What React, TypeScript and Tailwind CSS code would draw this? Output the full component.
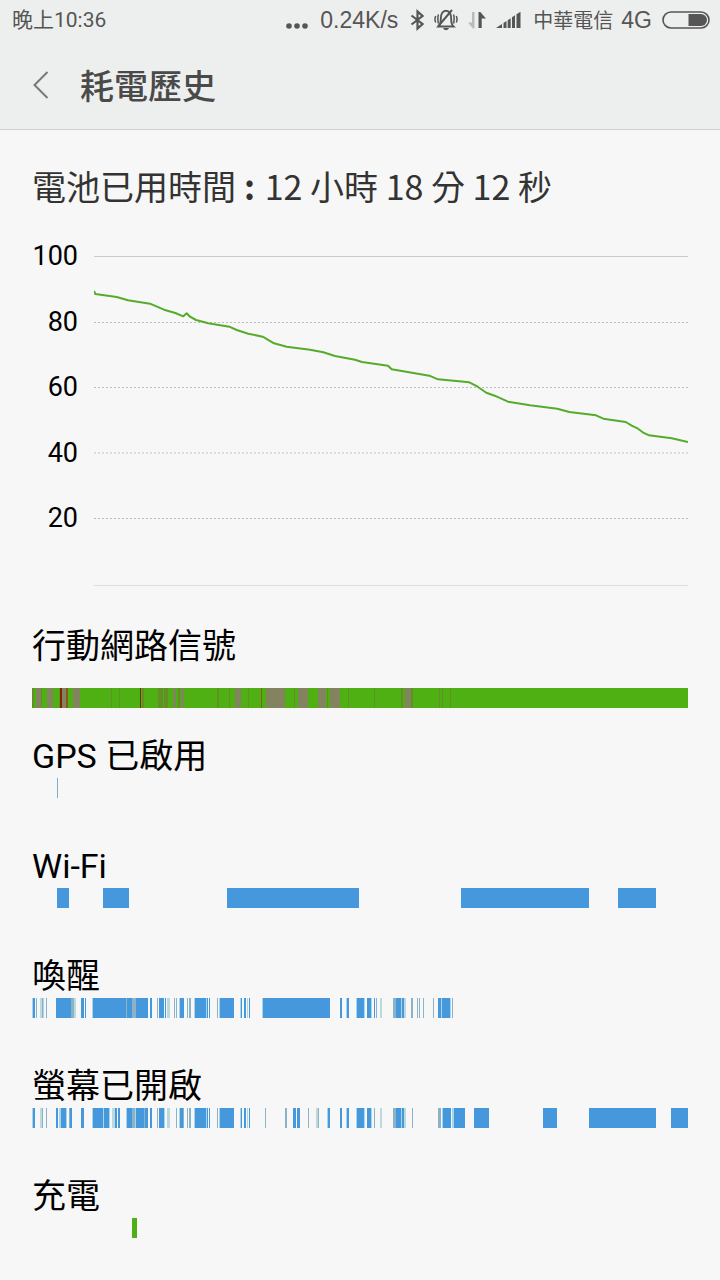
import type { ReactNode } from 'react'

// [start, end, shade]
type Segment = [number, number, string]

interface HistoryRow {
  label: string
  segments: Segment[]
  roomy?: boolean
}

const B = '#4598dc'
const G = '#8ab4c6'
const L = '#a9d5ea'
const P = '#bcd9de'
const GREEN = '#4fb013'
const OLIVE = '#638f27'
const TAUPE = '#84835f'
const BROWN = '#8a5a1c'
const RED = '#852208'

const signal: Segment[] = [
  [0, 656, GREEN], [0, 2, OLIVE], [4, 9, TAUPE], [9, 10, OLIVE], [15, 21, TAUPE],
  [27, 28, OLIVE], [28, 30, RED], [30, 34, TAUPE], [34, 36, BROWN], [41, 48, TAUPE],
  [79, 80, OLIVE], [87, 88, OLIVE], [108, 109, RED], [110, 112, OLIVE], [126, 131, OLIVE],
  [132, 136, OLIVE], [141, 144, TAUPE], [146, 148, OLIVE], [149, 152, TAUPE], [185, 187, OLIVE],
  [197, 198, OLIVE], [203, 209, TAUPE], [216, 217, OLIVE], [229, 230, BROWN], [234, 253, TAUPE],
  [262, 263, OLIVE], [266, 276, TAUPE], [286, 294, TAUPE], [295, 296, OLIVE], [298, 308, TAUPE],
  [316, 317, OLIVE], [342, 343, OLIVE], [369, 371, OLIVE], [373, 379, TAUPE], [379, 381, OLIVE],
  [407, 408, OLIVE], [410, 411, OLIVE], [418, 419, OLIVE],
]

const wifi: Segment[] = [
  [25, 37, B], [71, 97, B], [195, 327, B], [429, 557, B], [586, 624, B],
]

const wake: Segment[] = [
  [0, 1, L], [1, 3, B], [4, 5, G], [8, 10, P], [10, 11, G], [11, 12, L], [14, 15, G],
  [24, 39, B], [39, 42, G], [42, 44, P], [49, 52, B], [53, 54, B], [60, 61, L], [61, 94, B],
  [94, 95, G], [95, 100, B], [100, 104, G], [104, 116, B], [118, 120, B], [125, 126, G],
  [127, 132, B], [133, 134, B], [135, 138, P], [142, 143, G], [144, 145, G], [147, 148, L],
  [148, 152, B], [155, 156, G], [157, 159, G], [162, 163, L], [163, 174, B], [174, 175, L],
  [175, 176, B], [177, 178, B], [185, 186, G], [187, 188, L], [188, 202, B], [208, 209, L],
  [209, 210, B], [212, 214, B], [215, 216, L], [217, 218, B], [230, 231, L], [231, 298, B],
  [308, 310, B], [314, 315, L], [315, 317, B], [324, 325, L], [325, 332, B], [332, 333, L],
  [335, 339, B], [339, 340, L], [342, 343, B], [344, 345, G], [348, 350, P], [361, 364, G],
  [364, 369, B], [369, 370, L], [370, 372, B], [372, 374, P], [379, 381, G], [385, 386, G],
  [387, 388, G], [391, 392, G], [401, 402, G], [406, 409, B], [409, 410, L], [410, 418, B],
  [418, 419, L], [420, 421, G],
]

const screenOn: Segment[] = [
  [0, 1, L], [1, 3, B], [8, 10, P], [10, 11, G], [14, 15, G], [24, 26, B], [27, 29, L],
  [29, 34, B], [34, 35, L], [37, 38, G], [38, 40, B], [49, 52, B], [60, 61, L], [61, 71, B],
  [71, 72, L], [72, 77, B], [77, 78, L], [80, 83, P], [83, 85, B], [86, 88, B], [94, 95, L],
  [95, 100, B], [100, 103, G], [103, 104, L], [104, 112, B], [112, 113, G], [113, 116, B],
  [118, 120, B], [125, 126, G], [127, 132, B], [132, 133, L], [135, 138, P], [144, 145, G],
  [147, 148, L], [148, 151, B], [151, 152, G], [155, 156, G], [157, 159, G], [162, 163, L],
  [163, 174, B], [174, 175, L], [175, 176, B], [177, 178, B], [185, 186, G], [187, 188, L],
  [188, 202, B], [208, 209, L], [209, 210, B], [212, 214, B], [215, 216, L], [217, 218, B],
  [233, 234, G], [253, 255, G], [261, 264, B], [265, 268, B], [276, 277, G], [284, 286, P],
  [286, 287, G], [295, 296, L], [296, 298, B], [308, 310, B], [314, 315, L], [315, 317, B],
  [324, 325, L], [325, 332, B], [332, 333, L], [335, 339, B], [339, 340, L], [342, 343, G],
  [348, 350, P], [361, 364, G], [364, 369, B], [369, 370, L], [370, 372, B], [372, 374, P],
  [380, 381, G], [406, 409, G], [410, 411, L], [411, 419, B], [420, 422, L], [422, 433, B],
  [442, 457, B], [511, 525, B], [557, 624, B], [639, 656, B],
]

const rows: HistoryRow[] = [
  { label: '行動網路信號', segments: signal, roomy: true },
  { label: 'GPS 已啟用', segments: [[25, 26, '#7cafd3']] },
  { label: 'Wi-Fi', segments: wifi },
  { label: '喚醒', segments: wake },
  { label: '螢幕已開啟', segments: screenOn },
  { label: '充電', segments: [[100, 105, GREEN]] },
]

const levelPoints =
  '0,35 1.3,38 22.7,41 34,44.3 56,47.7 70,53.7 81.3,57 89.3,60.3 92.7,57.3 96,60.7 102,64 ' +
  '114.3,67.3 135.3,70.7 142.7,74 154.3,77.7 168.7,80.7 180,87.3 192.7,90.7 216,93.7 ' +
  '229.3,96.3 241,100 261,103.7 268,106 294,109.7 297.7,113.3 335.3,119.7 344,123.3 ' +
  '375.3,126.3 383.7,130.7 392.3,136.7 400.7,139.7 414,145.7 436,149.3 463.3,152.7 ' +
  '475.3,156 502,159.3 509.3,162.7 531.7,166 537.7,169.7 544,172.7 548.7,176.3 555,179.3 ' +
  '577.7,182.3 594,186'

function Icon({ className, viewBox, children }: { className: string; viewBox: string; children: ReactNode }) {
  return (
    <svg className={className} viewBox={viewBox} fill="none" stroke="currentColor" aria-hidden="true">
      {children}
    </svg>
  )
}

function StatusBar() {
  return (
    <div className="flex h-10 items-center justify-between pl-3 pr-[10px] text-[23px] leading-10 text-[#555]">
      <span className="text-[21px]">晚上10:36</span>
      <div className="flex items-center">
        <Icon className="mr-3 h-6 w-[22px]" viewBox="0 0 22 24">
          <g fill="currentColor" stroke="none">
            <circle cx="3" cy="18" r="2.8" />
            <circle cx="11" cy="18" r="2.8" />
            <circle cx="19" cy="18" r="2.8" />
          </g>
        </Icon>
        <span className="font-['Liberation_Sans',sans-serif]">0.24K/s</span>
        <Icon className="ml-3 h-6 w-[14px]" viewBox="0 0 14 24">
          <path d="M1.5 7.5 12.500 16 7.500 20.500V3.500L12.500 8 1.500 16.500" strokeWidth="2.200" />
        </Icon>
        <Icon className="ml-[10px] h-6 w-6" viewBox="0 0 24 24">
          <path d="M4.500 18.500h15c-2-1.800-2.300-4-2.300-7.500C17.200 6 15.500 2.800 12 2.800S6.800 6 6.800 11c0 3.500-.3 5.700-2.300 7.500z" strokeWidth="1.900" />
          <path d="M9 20h6c-.8 1.500-1.800 2.200-3 2.200S9.800 21.500 9 20z" fill="currentColor" stroke="none" />
          <path d="M4 18.500 18 2" strokeWidth="2" />
          <path d="M1.700 8C.8 10 .8 12.500 1.700 14.500M4.400 6.500c-.7 3-.7 6 0 9M22.300 8c.9 2 .9 4.500 0 6.500M19.600 6.500c.7 3 .7 6 0 9" strokeWidth="1.500" />
        </Icon>
        <Icon className="ml-[10px] h-6 w-[18px]" viewBox="0 0 18 24">
          <g stroke="none">
            <path d="M4 4h2.500v16.500H5L0 14.500h4z" fill="#b9bbba" />
            <path d="M10.500 4h1.800l5.700 6.500h-4.300V20h-3.200z" fill="currentColor" />
          </g>
        </Icon>
        <Icon className="ml-[10px] h-6 w-[25px]" viewBox="0 0 25 24">
          <g fill="currentColor" stroke="none">
            <path d="M0 20 6 16v4z" />
            <path d="M7.500 15l3-2v7h-3z" />
            <path d="M11.700 12.200l3-2V20h-3z" />
            <path d="M16 9.300l3-2V20h-3z" />
            <path d="M20.500 6.300l4-2.500V20h-4z" />
          </g>
        </Icon>
        <span className="ml-3 font-['Noto_Sans_CJK_TC',sans-serif] text-[20px]">中華電信</span>
        <span className="ml-2 font-['Liberation_Sans',sans-serif]">4G</span>
        <Icon className="ml-[10px] h-6 w-12" viewBox="0 0 48 24">
          <rect x="1" y="4" width="46" height="16" rx="8" strokeWidth="1.600" />
          <path d="M26.500 6H39a6 6 0 0 1 0 12H26.500z" fill="currentColor" stroke="none" />
        </Icon>
      </div>
    </div>
  )
}

function LevelChart() {
  return (
    <div className="mt-7 flex">
      <div className="flex h-[302px] w-[46px] shrink-0 flex-col justify-between text-right text-[27px] leading-10 text-black">
        {[100, 80, 60, 40, 20].map((value) => (
          <span key={value}>{value}</span>
        ))}
      </div>
      <svg
        className="mt-5 ml-4 h-[330px] min-w-0 flex-1"
        viewBox="0 0 594 330"
        preserveAspectRatio="none"
        fill="none"
        role="img"
        aria-label="電池"
      >
        <path d="M0 .5H594" stroke="#cbcbcb" />
        <path d="M0 66.500H594M0 131.500H594M0 262.500H594" stroke="#bdbdbd" strokeDasharray="2 2" />
        <path d="M0 197H594" stroke="#dcdcdc" strokeWidth="2" strokeDasharray="2 2" />
        <path d="M0 329.500H594" stroke="#dedede" />
        <polyline points={levelPoints} stroke="#55ac2b" strokeWidth="2" strokeLinejoin="round" />
      </svg>
    </div>
  )
}

function Timeline({ label, segments, roomy }: HistoryRow) {
  return (
    <section className="h-[110px]">
      <h2 className="text-[34px] leading-10 text-black">{label}</h2>
      <svg
        className={`h-5 w-full ${roomy ? 'mt-[22px]' : 'mt-[2px]'}`}
        viewBox="0 0 656 20"
        preserveAspectRatio="none"
        aria-hidden="true"
      >
        {segments.map(([start, end, fill], i) => (
          <rect key={i} x={start} y="0" width={end - start} height="20" fill={fill} />
        ))}
      </svg>
    </section>
  )
}

export default function App() {
  return (
    <div className="min-h-screen bg-[#f7f7f7] font-['Roboto','Noto_Sans_CJK_TC',sans-serif]">
      <header className="border-b border-[#d0d1d1] bg-[#edefee]">
        <StatusBar />
        <div className="flex h-[89px] items-center pl-7">
          <button type="button" aria-label="返回" className="flex h-10 w-[26px] items-center justify-center text-[#777]">
            <Icon className="h-7 w-4" viewBox="0 0 16 28">
              <path d="M14.500 1 1.500 14l13 13" strokeWidth="2" />
            </Icon>
          </button>
          <h1 className="mt-1 ml-[26px] text-[34px] font-medium leading-10 text-[#4a4a4a]">耗電歷史</h1>
        </div>
      </header>

      <main className="px-8 pt-[34px]">
        <p className="font-['Noto_Sans_CJK_TC',sans-serif] text-[34px] leading-[44px] text-[#333]">
          電池已用時間<span className="mr-0.5 ml-2 font-bold">:</span> 12 小時 18 分 12 秒
        </p>
        <LevelChart />
        <div className="mt-10">
          {rows.map((row) => (
            <Timeline key={row.label} {...row} />
          ))}
        </div>
      </main>
    </div>
  )
}
